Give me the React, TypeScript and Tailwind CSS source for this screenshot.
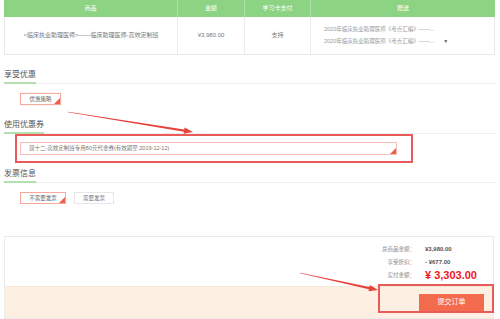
import React from 'react';

// small red corner mark on a selected option
const Corner = () => (
  <span className="absolute bottom-0 right-0 w-0 h-0 border-l-[6px] border-l-transparent border-b-[6px] border-b-[#ef5f48]" />
);

const SectionTitle = ({ children, lineW, className = '' }: { children: React.ReactNode; lineW: string; className?: string }) => (
  <div className={`flex items-end h-[14px] border-b border-[#efefef] ${className}`}>
    <span className={`text-[8px] leading-[10px] text-[#555] pb-[2px] border-b-2 border-[#b3e0ac] -mb-px whitespace-nowrap ${lineW}`}>
      {children}
    </span>
  </div>
);

// tapered annotation arrow
const arrowPoints = (x1: number, y1: number, x2: number, y2: number) => {
  const dx = x2 - x1;
  const dy = y2 - y1;
  const len = Math.hypot(dx, dy);
  const ux = dx / len;
  const uy = dy / len;
  const nx = -uy;
  const ny = ux;
  const headLen = 9;
  const headW = 3.2;
  const shaftW = 1.2;
  const tailW = 0.35;
  const bx = x2 - ux * headLen;
  const by = y2 - uy * headLen;
  const pts = [
    [x1 + nx * tailW, y1 + ny * tailW],
    [bx + nx * shaftW, by + ny * shaftW],
    [bx + nx * headW, by + ny * headW],
    [x2, y2],
    [bx - nx * headW, by - ny * headW],
    [bx - nx * shaftW, by - ny * shaftW],
    [x1 - nx * tailW, y1 - ny * tailW],
  ];
  return pts.map((p) => p.join(',')).join(' ');
};

export default function App() {
  const gift = '2020年临床执业助理医师《考点汇编》——...';

  return (
    <div className="relative w-[500px] h-[319px] overflow-hidden bg-white px-[4px] font-['Liberation_Sans','Noto_Sans_CJK_SC',sans-serif] text-[#666]">
      {/* Order table */}
      <div className="w-[491px]">
        <div className="grid grid-cols-[174px_67px_66px_184px] h-[17px] bg-[#8dd384] text-white text-[6px]">
          {['商品', '金额', '学习卡支付', '赠送'].map((t, i) => (
            <div key={t} className={`flex items-center justify-center ${i < 3 ? 'border-r border-white/30' : ''}`}>
              {t}
            </div>
          ))}
        </div>
        <div className="grid grid-cols-[173px_67px_66px_183px] h-[38px] border-x border-b border-[#e9e9e9] text-[6px] text-[#777]">
          <div className="flex items-center justify-center border-r border-[#ececec] whitespace-nowrap">
            &lt;临床执业助理医师&gt;——临床助理医师-高效定制班
          </div>
          <div className="flex items-center justify-center border-r border-[#ececec]">¥3,980.00</div>
          <div className="flex items-center justify-center border-r border-[#ececec]">支持</div>
          <div className="flex flex-col justify-center gap-[5px] pl-[13px] text-[5.5px] text-[#999] whitespace-nowrap">
            <div className="leading-[7px]">{gift}</div>
            <div className="flex items-center leading-[7px]">
              {gift}
              <span className="ml-[9px] text-[5px] text-[#555]">▼</span>
            </div>
          </div>
        </div>
      </div>

      {/* 享受优惠 */}
      <SectionTitle lineW="w-[32px]" className="mt-[15px]">享受优惠</SectionTitle>
      <div className="flex mt-[9px] ml-[16px]">
        <button className="relative w-[41px] h-[12px] border border-[#f5a89c] bg-white text-[5.5px] text-[#666] flex items-center justify-center shadow-[0_0_1px_#f7c4bb]">
          优惠策略
          <Corner />
        </button>
      </div>

      {/* 使用优惠券 */}
      <SectionTitle lineW="w-[40px]" className="mt-[15px]">使用优惠券</SectionTitle>
      <div className="ml-[11px] w-[398px] h-[29px] border-2 border-[#e95b5b] pt-[6px] pl-[3px]">
        <div className="relative w-[377px] h-[13px] border border-[#f8beb4] flex items-center pl-[8px] text-[5.5px] text-[#777] whitespace-nowrap">
          双十二-高效定制班专用80元代金券(有效期至:2019-12-12)
          <Corner />
        </div>
      </div>

      {/* 发票信息 */}
      <SectionTitle lineW="w-[32px]" className="mt-[6px]">发票信息</SectionTitle>
      <div className="flex gap-[8px] mt-[9px] ml-[16px]">
        <button className="relative w-[46px] h-[12px] border border-[#f5a89c] bg-white text-[5.5px] text-[#666] flex items-center justify-center">
          不需要发票
          <Corner />
        </button>
        <button className="w-[40px] h-[12px] border border-[#e6e6e6] bg-white text-[5.5px] text-[#777] flex items-center justify-center">
          需要发票
        </button>
      </div>

      {/* Totals panel */}
      <div className="mt-[32px] w-[490px] border border-[#ebebeb]">
        <div className="h-[49px] flex flex-col items-end pt-[6px] pr-[13px] text-[5.5px]">
          <div className="flex items-center h-[13px]">
            <span className="w-[40px] text-right text-[#888]">总商品金额：</span>
            <span className="w-[55px] ml-[10px] text-[6px] font-semibold text-[#555]">¥3,980.00</span>
          </div>
          <div className="flex items-center h-[13px]">
            <span className="w-[40px] text-right text-[#888]">享受折扣：</span>
            <span className="w-[55px] ml-[10px] text-[6px] font-semibold text-[#555]">- ¥677.00</span>
          </div>
          <div className="flex items-center h-[13px]">
            <span className="w-[40px] text-right text-[#888]">实付金额：</span>
            <span className="w-[55px] ml-[10px] text-[11px] leading-[13px] font-bold text-[#f2151a] whitespace-nowrap">¥ 3,303.00</span>
          </div>
        </div>
        <div className="h-[32px] bg-[#fdf0e3] border-t border-[#f6e7db] flex items-center justify-end pr-[9px]">
          <button className="w-[65px] h-[18px] bg-[#f26b4d] text-white text-[7px] flex items-center justify-center">
            提交订单
          </button>
        </div>
      </div>

      {/* annotation: highlight around submit button */}
      <div className="absolute left-[378px] top-[284px] w-[116px] h-[29px] border-2 border-[#e95b5b] pointer-events-none" />

      {/* annotation arrows */}
      <svg className="absolute left-0 top-0 pointer-events-none" width="500" height="319" viewBox="0 0 500 319">
        <polygon points={arrowPoints(68, 112, 193, 132)} fill="#e8443e" />
        <polygon points={arrowPoints(300, 273, 378, 290)} fill="#e8443e" />
      </svg>
    </div>
  );
}
